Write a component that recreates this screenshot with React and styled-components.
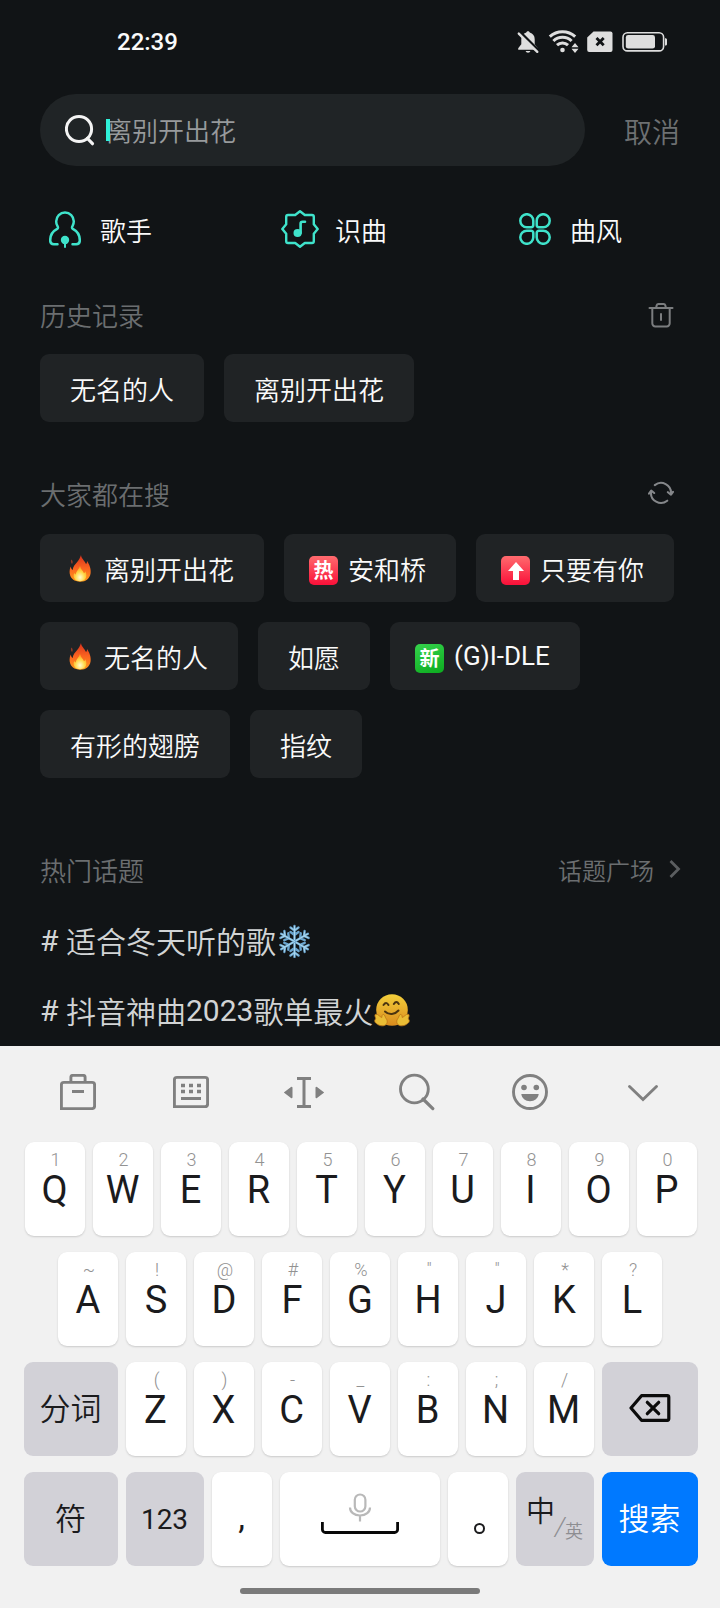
import React from "react";
import styled, { createGlobalStyle } from "styled-components";

const TEAL = "#3fe3cb";
const GREY = "#808080";

const history = ["无名的人", "离别开出花"];

const hotSearches = [
  { text: "离别开出花", mark: "fire" },
  { text: "安和桥", mark: "hot" },
  { text: "只要有你", mark: "up" },
  { text: "无名的人", mark: "fire" },
  { text: "如愿" },
  { text: "(G)I-DLE", mark: "new", latin: true },
  { text: "有形的翅膀" },
  { text: "指纹" },
];

const firstRow = ["Q1", "W2", "E3", "R4", "T5", "Y6", "U7", "I8", "O9", "P0"];
const secondRow = ["A~", "S!", "D@", "F#", "G%", "H″", "J″", "K*", "L?"];
const thirdRow = ["Z(", "X)", "C-", "V_", "B:", "N;", "M/"];

/* Status bar icons */
const BellOffIcon = () => (
  <svg width="22" height="24" viewBox="0 0 22 24">
    <path
      d="M11 1.2c1 0 1.6.6 1.7 1.4 3.200 .8 5 3.300 5 6.700v5l3.100 4v1.500H1.200v-1.500l3.100-4v-5c0-3.400 1.800-5.900 5-6.700.1-.8.700-1.400 1.700-1.400z"
      fill="#dedede"
    />
    <path d="M8.600 21h4.800c-.4 1.100-1.200 1.700-2.400 1.700s-2-.6-2.400-1.700z" fill="#dedede" />
    <path d="M2.500 2 21.500 21" stroke="#111416" strokeWidth="3.600" />
    <path d="M1.800 3.600 20.300 21.800" stroke="#dedede" strokeWidth="2.400" strokeLinecap="round" />
  </svg>
);

const WifiIcon = () => (
  <svg width="32" height="24" viewBox="0 0 32 24" fill="none">
    <g stroke="#dedede" strokeWidth="3">
      <path d="M1.800 6.700a18.500 18.500 0 0 1 25.400 0" />
      <path d="M5.400 11a13 13 0 0 1 18.200 0" />
      <path d="M9 15.200a8 8 0 0 1 11 0" />
    </g>
    <circle cx="14.500" cy="20" r="2.300" fill="#dedede" />
    <path d="m27 13 3.500 4.200h-7zM27 23l3.500-4.200h-7z" fill="#dedede" />
  </svg>
);

const SimOffIcon = () => (
  <svg width="26" height="22" viewBox="0 0 26 22">
    <path
      d="M6.500.5H23.500a2 2 0 0 1 2 2V19a2 2 0 0 1-2 2H2.200a2 2 0 0 1-2-2V6.500z"
      fill="#dedede"
    />
    <path d="m9.500 7 7.200 7.200M16.700 7 9.500 14.200" stroke="#111416" strokeWidth="2.800" />
  </svg>
);

const BatteryIcon = () => (
  <svg width="46" height="22" viewBox="0 0 46 22" fill="none">
    <rect x="1" y="1.700" width="40.600" height="18.200" rx="4.500" stroke="#dedede" strokeWidth="1.600" />
    <rect x="3.800" y="4" width="29.200" height="13.600" rx="2.400" fill="#dedede" />
    <path d="M43 7.200c1.400 0 2 .5 2 1.500v4.200c0 1-.6 1.500-2 1.500z" fill="#dedede" />
  </svg>
);

const SearchIcon = () => (
  <svg width="30" height="32" viewBox="0 0 30 32" fill="none">
    <circle cx="14" cy="15" r="12.600" stroke="#f4f4f4" strokeWidth="3" />
    <path d="m22.500 24.500 5 5.200" stroke="#f4f4f4" strokeWidth="3.200" strokeLinecap="round" />
  </svg>
);

/* Category icons */
const SingerIcon = () => (
  <svg width="32" height="37" viewBox="0 0 32 37" fill="none">
    <path
      d="M8.500 33.200H4.800C2.400 33.200 1.200 32 1.200 29.500c0-5.200 2.600-9.200 6.600-11.300 1.500-.8 1.400-1.900.6-3.300A8.600 8.600 0 0 1 7.200 10.300a8.800 8.800 0 0 1 17.600 0c0 1.700-.4 3.200-1.200 4.600-.8 1.400-.9 2.500.6 3.300 4 2.100 6.600 6.100 6.600 11.300 0 2.500-1.200 3.700-3.600 3.700H23.500"
      stroke={TEAL}
      strokeWidth="2.500"
      strokeLinecap="round"
    />
    <circle cx="16" cy="29" r="4.200" fill={TEAL} />
    <path d="M16 30v6" stroke={TEAL} strokeWidth="2" strokeLinecap="round" />
  </svg>
);

const RecognizeIcon = () => (
  <svg width="38" height="38" viewBox="-19 -19 38 38" fill="none">
    <path
      d="M0-17.700 4.800-14H12a1.800 1.800 0 0 1 1.800 1.800V-4.800L17.700 0 13.800 4.800V12.200a1.800 1.800 0 0 1-1.800 1.800H4.800L0 17.700-4.800 14H-12a1.800 1.800 0 0 1-1.800-1.800V4.800L-17.700 0-13.800-4.800V-12.200a1.800 1.800 0 0 1 1.800-1.800H-4.800Z"
      stroke={TEAL}
      strokeWidth="2.400"
      strokeLinejoin="round"
    />
    <circle cx="-2.400" cy="4" r="4.100" fill={TEAL} />
    <path d="M.600 4V-5.300Q.600-7.300 2.600-7.300H5" stroke={TEAL} strokeWidth="2.600" strokeLinecap="round" />
  </svg>
);

const StyleIcon = () => (
  <svg width="32" height="32" viewBox="0 0 32 32" fill="none" stroke={TEAL} strokeWidth="2.500">
    <path d="M7.800 1.200A6.500 6.500 0 0 1 14.300 7.700V12a2.200 2.200 0 0 1-2.200 2.200H7.800a6.500 6.500 0 0 1 0-13z" />
    <path d="M24.200 1.200A6.500 6.500 0 0 0 17.700 7.700V12a2.200 2.200 0 0 0 2.200 2.200h4.300a6.500 6.500 0 0 0 0-13z" />
    <path d="M7.800 30.800A6.500 6.500 0 0 0 14.300 24.300V20a2.200 2.200 0 0 0-2.200-2.200H7.800a6.500 6.500 0 0 0 0 13z" />
    <path d="M24.200 30.800A6.500 6.500 0 0 1 17.700 24.300V20a2.200 2.200 0 0 1 2.200-2.200h4.300a6.500 6.500 0 0 1 0 13z" />
  </svg>
);

/* Section icons */
const TrashIcon = () => (
  <svg width="26" height="26" viewBox="0 0 26 26" fill="none" stroke="#7b7d7f" strokeWidth="2" strokeLinecap="round">
    <path d="M1.500 6H24.500" />
    <path d="M8.200 5.500 8.700 3.200A1.800 1.800 0 0 1 10.400 1.900h5.200A1.800 1.800 0 0 1 17.300 3.200L17.800 5.500" />
    <path d="M4.300 6.500V21.300A3 3 0 0 0 7.300 24.400H18.700A3 3 0 0 0 21.700 21.300V6.500" />
    <path d="M13 12v6" />
  </svg>
);

const RefreshIcon = () => (
  <svg width="26" height="24" viewBox="0 0 26 24" fill="none" stroke="#85878a" strokeWidth="2.100" strokeLinecap="round" strokeLinejoin="round">
    <path d="M6.800 4.100A10 10 0 0 1 23 12.600" />
    <path d="M19.200 19.700A10 10 0 0 1 3 10.900" />
    <path d="M19.900 11.200 23 13.700 25 10.900" />
    <path d="M1 12.600 3.200 9.600 6.200 12" />
  </svg>
);

const ArrowRight = () => (
  <svg width="14" height="20" viewBox="0 0 14 20" fill="none">
    <path d="m2.500 2 8 8-8 8" stroke="#5b5e60" strokeWidth="2.800" />
  </svg>
);

const FireIcon = () => (
  <svg width="28" height="30" viewBox="0 -2 28 30">
    <defs>
      <linearGradient id="flame" x1="0" y1="0" x2="0" y2="1">
        <stop offset="0" stopColor="#d9301c" />
        <stop offset=".5" stopColor="#fb6420" />
        <stop offset="1" stopColor="#ff9c1c" />
      </linearGradient>
      <radialGradient id="glow" cx=".5" cy=".75" r=".6">
        <stop offset="0" stopColor="#fffad0" />
        <stop offset=".6" stopColor="#ffd84a" />
        <stop offset="1" stopColor="#ffac26" />
      </radialGradient>
    </defs>
    <path
      d="M15 0c0 3 3.500 5.500 5 9 .8-.5 1-1.500 1-3 2.300 3.200 4.300 7.800 3.600 12.200C23.800 23.500 20 26.700 14.200 26.700S4.400 23.500 3.700 18.500c-.3-2.500.2-5 1-7 .4 2 1 3 2 3.600C7.200 11 9 9.500 11 7.200 13 5 14.200 2.500 15 0z"
      fill="url(#flame)"
    />
    <path d="M5.300 4.500C7 5.500 7 7.800 6 9 4.800 7.800 4.600 6 5.300 4.500z" fill="#8e3a28" />
    <path
      d="M14 11c.5 3 2.800 4.500 4 7.200.7-.4 1.100-1.200 1.300-2 1.600 2.800 1.500 6-.5 8.200-2.400 2.300-7.300 2.300-9.700 0-1.800-2-1.900-4.300-.8-6.400.4.8.9 1.200 1.500 1.500.2-3.500 3.300-5 4.200-8.500z"
      fill="url(#glow)"
    />
  </svg>
);

const UpArrow = () => (
  <svg width="18" height="20" viewBox="0 0 18 20">
    <path d="M9 1 17 10H12V19H6V10H1z" fill="#fff" />
  </svg>
);

const Snowflake = () => (
  <svg width="36" height="36" viewBox="-18.500 -19.500 36 36" fill="none" strokeLinecap="round">
    {[0, 60, 120, 180, 240, 300].map((deg) => (
      <g key={deg} transform={`rotate(${deg})`}>
        <path d="M0 0V-15.500M0-6.500-4-9.500M0-6.500 4-9.500M0-11-4-14M0-11 4-14" stroke="#6ba6cf" strokeWidth="2.400" />
        <path d="M0 0V-15M0-11-3.500-13.600M0-11 3.500-13.600" stroke="#a9d6ee" strokeWidth="1" />
      </g>
    ))}
  </svg>
);

const HugFace = () => (
  <svg width="37" height="36" viewBox="-1 -1 37 36">
    <defs>
      <linearGradient id="face" x1="0" y1="0" x2="0" y2="1">
        <stop offset="0" stopColor="#f3cf3b" />
        <stop offset="1" stopColor="#d98b1d" />
      </linearGradient>
    </defs>
    <circle cx="18" cy="17" r="15.800" fill="url(#face)" />
    <g fill="none" stroke="#4b3410" strokeWidth="2" strokeLinecap="round">
      <path d="M9.500 12q2.700-4 5 0M19.800 11q2.600-4 5 0" />
      <path d="M11 18.500c4 3.800 10 3 13.500-1" />
    </g>
    <path
      d="M1.200 21.500c-1 2 .8 3 .5 4.500-1.400.7-1.500 3.200.8 4.600 2.500 2.200 6.500 3 8.900 1.400 2.300-1.600 2.300-4.500.7-6.500-1.300-1.600-1-3.500-2.300-4-1.700-.4-1.900 1.500-1.900 2.900C5.600 24 3.500 20 1.200 21.500z"
      fill="#eabd35"
      stroke="#bd7517"
      strokeWidth=".8"
    />
    <path
      d="M34.800 21.500c1 2-.8 3-.5 4.500 1.400.7 1.500 3.200-.8 4.600-2.500 2.200-6.500 3-8.900 1.400-2.300-1.600-2.300-4.500-.7-6.500 1.300-1.600 1-3.500 2.300-4 1.700-.4 1.900 1.500 1.900 2.900C30.400 24 32.500 20 34.800 21.500z"
      fill="#eabd35"
      stroke="#bd7517"
      strokeWidth=".8"
    />
  </svg>
);

/* Keyboard icons */
const ToolboxIcon = () => (
  <svg width="36" height="36" viewBox="0 0 36 36" fill="none" stroke={GREY} strokeWidth="2.900">
    <path d="M1.400 34.600V10.900a2.500 2.500 0 0 1 2.500-2.500H32.100a2.500 2.500 0 0 1 2.500 2.500V32.100a2.500 2.500 0 0 1-2.500 2.500z" />
    <path d="M10.900 8V3.400a2 2 0 0 1 2-2H23.100a2 2 0 0 1 2 2V8M12 17.500H24" />
  </svg>
);

const KeypadIcon = () => (
  <svg width="36" height="36" viewBox="0 0 36 36" fill="none" stroke={GREY} strokeWidth="2.900">
    <path d="M1.400 32.600V5.900a2.500 2.500 0 0 1 2.500-2.500H32.100a2.500 2.500 0 0 1 2.500 2.500V30.100a2.500 2.500 0 0 1-2.500 2.500z" />
    <path d="M8 11.500h20M8 17.500h20" strokeWidth="3.400" strokeDasharray="4 4" />
    <path d="M8 24.500h20" strokeWidth="3" />
  </svg>
);

const CursorIcon = () => (
  <svg width="42" height="36" viewBox="0 0 42 36" fill={GREY}>
    <path d="M14 4.400h14M14 32.600h14M21 4V33" stroke={GREY} strokeWidth="3" />
    <path d="M.8 18.500 8 13q1.500-.8 1.500 1v9q0 1.800-1.500 1zM41.200 18.500 34 13q-1.500-.8-1.500 1v9q0 1.800 1.500 1z" />
  </svg>
);

const FindIcon = () => (
  <svg width="36" height="38" viewBox="0 0 36 38" fill="none" stroke={GREY} strokeWidth="2.900">
    <circle cx="15.400" cy="16" r="13.900" />
    <path d="m24 26 9.800 9.600" strokeWidth="3.200" strokeLinecap="round" />
  </svg>
);

const SmileIcon = () => (
  <svg width="36" height="36" viewBox="0 0 36 36">
    <circle cx="18" cy="18" r="16.500" fill="none" stroke={GREY} strokeWidth="2.900" />
    <circle cx="12" cy="13.500" r="2.800" fill={GREY} />
    <circle cx="24.300" cy="13.500" r="2.800" fill={GREY} />
    <path d="M9.300 20H26.700c-.5 4.200-4 7.200-8.700 7.200S9.800 24.200 9.300 20z" fill={GREY} />
  </svg>
);

const CollapseIcon = () => (
  <svg width="32" height="20" viewBox="0 0 32 20" fill="none">
    <path d="m2.500 4.500 13.500 13 13.500-13" stroke={GREY} strokeWidth="2.900" strokeLinecap="round" />
  </svg>
);

const BackspaceIcon = () => (
  <svg width="42" height="28" viewBox="0 0 42 28" fill="none" stroke="#0b0b0b">
    <path d="M12.500 1.700H38.300a1.500 1.500 0 0 1 1.500 1.500V24.800a1.500 1.500 0 0 1-1.500 1.500H12.500L2 14z" strokeWidth="3.200" strokeLinejoin="round" />
    <path d="m18.300 8.300 11.400 11.400M29.700 8.300 18.300 19.700" strokeWidth="3.200" strokeLinecap="round" />
  </svg>
);

const SpaceIcon = () => (
  <svg width="78" height="42" viewBox="0 0 78 42" fill="none">
    <rect x="33.800" y="1.500" width="10.600" height="17" rx="5.300" stroke="#b9b9b9" strokeWidth="2.200" />
    <path d="M29 14.500c0 4.600 4 8 10 8s10-3.400 10-8M39 22.500v6" stroke="#b9b9b9" strokeWidth="2.200" />
    <path d="M1.400 29v7.500a3 3 0 0 0 3 3H73.600a3 3 0 0 0 3-3V29" stroke="#080808" strokeWidth="2.800" />
  </svg>
);

const Mark = ({ type }) => {
  if (type === "fire") return <FireIcon />;
  return (
    <Badge $green={type === "new"}>
      {type === "up" ? <UpArrow /> : type === "hot" ? "热" : "新"}
    </Badge>
  );
};

const LetterKey = ({ value }) => (
  <Key>
    <Hint>{value[1]}</Hint>
    <Letter>{value[0]}</Letter>
  </Key>
);

const App = () => (
  <>
    <GlobalStyle />
    <Screen lang="zh-CN">
      <Content>
        <StatusBar>
          <Time>22:39</Time>
          <StatusIcons>
            <BellOffIcon />
            <WifiIcon />
            <SimOffIcon />
            <BatteryIcon />
          </StatusIcons>
        </StatusBar>

        <SearchRow>
          <SearchBox>
            <SearchIcon />
            <Caret />
            <Placeholder>离别开出花</Placeholder>
          </SearchBox>
          <Cancel>取消</Cancel>
        </SearchRow>

        <Categories>
          <Category>
            <IconSlot>
              <SingerIcon />
            </IconSlot>
            歌手
          </Category>
          <Category>
            <IconSlot>
              <RecognizeIcon />
            </IconSlot>
            识曲
          </Category>
          <Category>
            <IconSlot>
              <StyleIcon />
            </IconSlot>
            曲风
          </Category>
        </Categories>

        <SectionHead $top={27} $lift={1} $textLift={1}>
          <h2>历史记录</h2>
          <TrashIcon />
        </SectionHead>
        <Chips>
          {history.map((item) => (
            <Chip key={item}>{item}</Chip>
          ))}
        </Chips>

        <SectionHead $top={45} $lift={5} $textLift={3}>
          <h2>大家都在搜</h2>
          <RefreshIcon />
        </SectionHead>
        <Chips>
          {hotSearches.map(({ text, mark, latin }) => (
            <Chip key={text} $marked={!!mark}>
              {mark && <Mark type={mark} />}
              {latin ? <Latin>{text}</Latin> : text}
            </Chip>
          ))}
        </Chips>

        <SectionHead $top={64} $textLift={1}>
          <h2>热门话题</h2>
          <More>
            话题广场
            <ArrowRight />
          </More>
        </SectionHead>
        <Topics>
          <Topic>
            <Latin># </Latin>适合冬天听的歌
            <Snowflake />
          </Topic>
          <Topic>
            <Latin># </Latin>抖音神曲<Latin>2023</Latin>歌单最火
            <HugFace />
          </Topic>
        </Topics>
      </Content>

      <Keyboard>
        <Toolbar>
          <ToolboxIcon />
          <KeypadIcon />
          <CursorIcon />
          <FindIcon />
          <SmileIcon />
          <CollapseIcon />
        </Toolbar>
        <Keys>
          <KeyRow>
            {firstRow.map((k) => (
              <LetterKey key={k} value={k} />
            ))}
          </KeyRow>
          <KeyRow $inset={1}>
            {secondRow.map((k) => (
              <LetterKey key={k} value={k} />
            ))}
          </KeyRow>
          <KeyRow>
            <Key $w={94} $tone="grey">
              <Label>分词</Label>
            </Key>
            {thirdRow.map((k) => (
              <LetterKey key={k} value={k} />
            ))}
            <Key $w={96} $tone="grey" $lift={2}>
              <BackspaceIcon />
            </Key>
          </KeyRow>
          <KeyRow>
            <Key $w={94} $tone="grey">
              <Label>符</Label>
            </Key>
            <Key $w={78} $tone="grey">
              <Digits>123</Digits>
            </Key>
            <Key>
              <Comma>,</Comma>
            </Key>
            <Key $w={160} $lift={10}>
              <SpaceIcon />
            </Key>
            <Key>
              <Period />
            </Key>
            <Key $w={78} $tone="grey">
              <Lang>
                <b>中</b>
                <i>/</i>
                <small>英</small>
              </Lang>
            </Key>
            <Key $w={96} $tone="blue">
              <Label>搜索</Label>
            </Key>
          </KeyRow>
        </Keys>
        <HomeBar />
      </Keyboard>
    </Screen>
  </>
);

const GlobalStyle = createGlobalStyle`
  * {
    box-sizing: border-box;
    margin: 0;
    padding: 0;
  }

  body {
    background: #111416;
  }

  svg {
    display: block;
    flex: none;
  }
`;

const Screen = styled.div`
  width: 720px;
  height: 1608px;
  display: flex;
  flex-direction: column;
  overflow: hidden;
  background: #111416;
  color: #fafafa;
  font-family: Roboto, "Noto Sans CJK SC", sans-serif;
  font-size: 26px;
  font-weight: 350;
  white-space: nowrap;
`;

const Content = styled.main`
  height: 1046px;
  padding: 0 40px;
  overflow: hidden;
`;

const Latin = styled.span`
  font-weight: 400;
  white-space: pre;
`;

const StatusBar = styled.header`
  display: flex;
  align-items: center;
  justify-content: space-between;
  height: 84px;
  padding: 0 12px 0 77px;
`;

const Time = styled.span`
  font-size: 24px;
  font-weight: 500;
`;

const StatusIcons = styled.div`
  display: flex;
  align-items: center;

  svg:nth-child(2) {
    margin-left: 9px;
  }

  svg:nth-child(3) {
    margin-left: 7px;
  }

  svg:nth-child(4) {
    margin-left: 9px;
  }
`;

const SearchRow = styled.div`
  display: flex;
  align-items: center;
  justify-content: space-between;
  margin-top: 10px;
`;

const SearchBox = styled.div`
  display: flex;
  align-items: center;
  width: 545px;
  height: 72px;
  padding-left: 25px;
  border-radius: 36px;
  background: #202426;
`;

const Caret = styled.span`
  width: 4px;
  height: 22px;
  margin: 0 -4px 0 11px;
  background: #2ff0d8;
  z-index: 1;
`;

const Placeholder = styled.span`
  padding-top: 3px;
  color: #979a9c;
  line-height: 36px;
`;

const Cancel = styled.button`
  border: none;
  background: none;
  color: #6d7072;
  font: inherit;
  font-size: 28px;
  padding-top: 1px;
`;

const Categories = styled.nav`
  display: grid;
  grid-template-columns: 235px 235px 1fr;
  margin: 34px 0 0 6px;
`;

const Category = styled.div`
  display: flex;
  align-items: center;
  height: 60px;
  padding-bottom: 2px;
`;

const IconSlot = styled.span`
  display: flex;
  justify-content: center;
  width: 38px;
  margin-right: 16px;
`;

const SectionHead = styled.div`
  display: flex;
  align-items: center;
  justify-content: space-between;
  height: 56px;
  margin-top: ${({ $top }) => $top}px;
  padding-right: 6px;
  color: #6b6e70;

  h2 {
    margin-bottom: ${({ $textLift }) => $textLift}px;
    font-size: 26px;
    font-weight: inherit;
  }

  > svg {
    margin-bottom: ${({ $lift }) => $lift || 0}px;
  }
`;

const Chips = styled.div`
  display: flex;
  flex-wrap: wrap;
  gap: 20px;
  margin-top: 11px;
`;

const Chip = styled.button`
  display: flex;
  align-items: center;
  gap: 10px;
  height: 68px;
  padding: 0 30px 0 ${({ $marked }) => ($marked ? 26 : 30)}px;
  border: none;
  border-radius: 9px;
  background: #202325;
  color: #fafafa;
  font: inherit;
`;

const Badge = styled.span`
  display: flex;
  align-items: center;
  justify-content: center;
  width: 29px;
  height: 29px;
  margin: 5px 0 0 -1px;
  border-radius: 5px;
  background: ${({ $green }) =>
    $green
      ? "linear-gradient(160deg, #35d34c, #0cab1f)"
      : "linear-gradient(#ff6b6e, #fa1039)"};
  color: #fff;
  font-size: 20px;
  font-weight: 700;
  line-height: 28px;
`;

const More = styled.div`
  display: flex;
  align-items: center;
  gap: 14px;
  margin: 0 -8px 2px 0;
  font-size: 24px;
`;

const Topics = styled.ul`
  list-style: none;
  margin-top: 7px;
`;

const Topic = styled.li`
  display: flex;
  align-items: center;
  height: 70px;
  color: #d2d4d5;
  font-size: 30px;
`;

const Keyboard = styled.section`
  display: flex;
  flex-direction: column;
  align-items: center;
  height: 562px;
  background: #f1f1f1;
  color: #1b1b1d;
`;

const Toolbar = styled.div`
  display: grid;
  grid-template-columns: repeat(6, 113px);
  place-items: center;
  width: 678px;
  height: 92px;
`;

const Keys = styled.div`
  display: flex;
  flex-direction: column;
  gap: 16px;
  margin-top: 4px;
  padding-left: 1px;
`;

const KeyRow = styled.div`
  display: flex;
  justify-content: center;
  gap: 8px;
  padding-right: ${({ $inset }) => $inset || 0}px;
`;

const tones = {
  grey: "#d2d1d7",
  blue: "#0079ff",
};

const Key = styled.div`
  display: flex;
  flex-direction: column;
  align-items: center;
  justify-content: center;
  width: ${({ $w }) => $w || 60}px;
  height: 94px;
  padding-bottom: ${({ $lift }) => $lift || 0}px;
  border-radius: 9px;
  background: ${({ $tone }) => tones[$tone] || "#fff"};
  color: ${({ $tone }) => ($tone === "blue" ? "#fff" : "inherit")};
  box-shadow: ${({ $tone }) => ($tone ? "none" : "0 1px 2px rgba(0, 0, 0, 0.16)")};
`;

const Hint = styled.span`
  height: 23px;
  padding-left: 2px;
  color: #929292;
  font-size: 18px;
  line-height: 22px;
`;

const Letter = styled.span`
  height: 57px;
  font-size: 38px;
  font-weight: 400;
  line-height: 36px;
`;

const Label = styled.span`
  padding-bottom: 5px;
  font-size: 31px;
`;

const Digits = styled.span`
  font-size: 28px;
  font-weight: 380;
`;

const Comma = styled.span`
  padding-bottom: 5px;
  font-size: 34px;
  font-weight: 400;
`;

const Period = styled.span`
  width: 11px;
  height: 11px;
  margin: 18px 0 0 3px;
  border: 2px solid #1b1b1d;
  border-radius: 50%;
`;

const Lang = styled.span`
  display: flex;
  align-items: center;

  b {
    font-size: 29px;
    font-weight: inherit;
    margin-bottom: 20px;
  }

  i {
    color: #8d8d91;
    font-size: 26px;
    font-weight: 300;
    margin-top: 14px;
  }

  small {
    color: #8d8d91;
    font-size: 18px;
    margin-top: 22px;
  }
`;

const HomeBar = styled.div`
  width: 240px;
  height: 6px;
  margin-top: 22px;
  border-radius: 3px;
  background: #7a7a7a;
`;

export default App;
